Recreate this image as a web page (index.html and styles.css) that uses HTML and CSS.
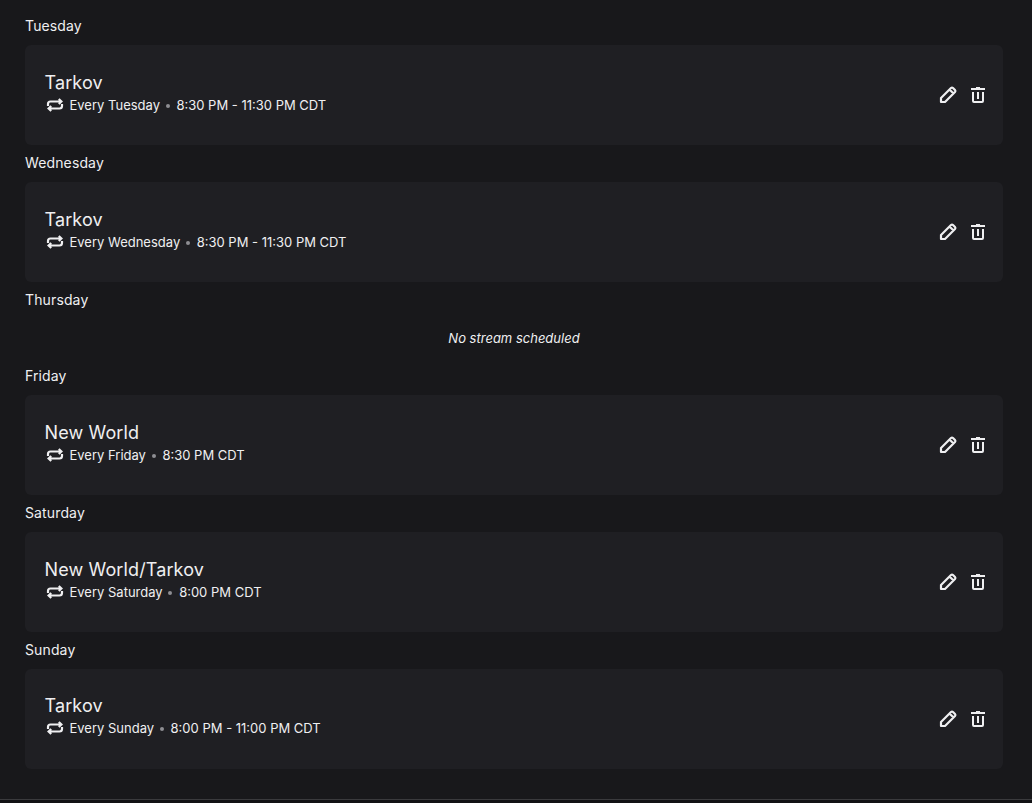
FILE: index.html
```html
<!DOCTYPE html>
<html lang="en">
<head>
<meta charset="utf-8">
<title>Schedule</title>
<link rel="stylesheet" href="styles.css">
</head>
<body>
<svg class="defs" width="0" height="0" aria-hidden="true">
  <symbol id="repeat" viewBox="0 0 20 20"><path fill="none" stroke="currentColor" stroke-width="2.200" d="M3 11V9A2.500 2.500 0 0 1 5.500 6.500H16M13.800 4l2.600 2.500L13.800 9M17 9v2A2.500 2.500 0 0 1 14.500 13.500H4M6.200 11L3.600 13.500 6.200 16"/></symbol>
  <symbol id="pencil" viewBox="0 0 20 20"><path fill="none" stroke="currentColor" stroke-width="2.200" stroke-linejoin="round" d="M3 17v-4L13 3a1.500 1.500 0 0 1 2 0l2 2a1.500 1.500 0 0 1 0 2L7 17ZM11.500 4.500l4 4"/></symbol>
  <symbol id="trash" viewBox="0 0 20 20"><path fill="currentColor" d="M12 2H8v1H3v2h14V3h-5V2z"/><path fill="currentColor" d="M4 7v9a2 2 0 0 0 2 2h8a2 2 0 0 0 2-2V7h-2v9H6V7H4z"/><path fill="currentColor" d="M11 7H9v7h2V7z"/></symbol>
</svg>
<main class="schedule">
  <section class="day">
    <h2 class="day-label">Tuesday</h2>
    <article class="card">
      <div class="info">
        <div class="title">Tarkov</div>
        <div class="meta"><svg class="repeat"><use href="#repeat"/></svg><span>Every Tuesday</span><i class="dot"></i><span>8:30 PM - 11:30 PM CDT</span></div>
      </div>
      <div class="actions"><svg class="icon"><use href="#pencil"/></svg><svg class="icon"><use href="#trash"/></svg></div>
    </article>
  </section>
  <section class="day">
    <h2 class="day-label">Wednesday</h2>
    <article class="card">
      <div class="info">
        <div class="title">Tarkov</div>
        <div class="meta"><svg class="repeat"><use href="#repeat"/></svg><span>Every Wednesday</span><i class="dot"></i><span>8:30 PM - 11:30 PM CDT</span></div>
      </div>
      <div class="actions"><svg class="icon"><use href="#pencil"/></svg><svg class="icon"><use href="#trash"/></svg></div>
    </article>
  </section>
  <section class="day">
    <h2 class="day-label">Thursday</h2>
    <p class="empty">No stream scheduled</p>
  </section>
  <section class="day">
    <h2 class="day-label">Friday</h2>
    <article class="card">
      <div class="info">
        <div class="title">New World</div>
        <div class="meta"><svg class="repeat"><use href="#repeat"/></svg><span>Every Friday</span><i class="dot"></i><span>8:30 PM CDT</span></div>
      </div>
      <div class="actions"><svg class="icon"><use href="#pencil"/></svg><svg class="icon"><use href="#trash"/></svg></div>
    </article>
  </section>
  <section class="day">
    <h2 class="day-label">Saturday</h2>
    <article class="card">
      <div class="info">
        <div class="title">New World/Tarkov</div>
        <div class="meta"><svg class="repeat"><use href="#repeat"/></svg><span>Every Saturday</span><i class="dot"></i><span>8:00 PM CDT</span></div>
      </div>
      <div class="actions"><svg class="icon"><use href="#pencil"/></svg><svg class="icon"><use href="#trash"/></svg></div>
    </article>
  </section>
  <section class="day">
    <h2 class="day-label">Sunday</h2>
    <article class="card">
      <div class="info">
        <div class="title">Tarkov</div>
        <div class="meta"><svg class="repeat"><use href="#repeat"/></svg><span>Every Sunday</span><i class="dot"></i><span>8:00 PM - 11:00 PM CDT</span></div>
      </div>
      <div class="actions"><svg class="icon"><use href="#pencil"/></svg><svg class="icon"><use href="#trash"/></svg></div>
    </article>
  </section>
</main>
<div class="rule"></div>
</body>
</html>
```
FILE: styles.css
```css
* { box-sizing: border-box; }
html, body { margin: 0; height: 803px; overflow: hidden; }
body {
  background: #18181b;
  color: #efeff1;
  font-family: Inter, "Liberation Sans", sans-serif;
  display: flex;
  flex-direction: column;
}
.defs { position: absolute; }
.schedule { padding: 8.5px 29px 0 25px; flex: 1; }
.day-label {
  margin: 0;
  font-size: 14px;
  font-weight: 400;
  letter-spacing: 0.13px;
  line-height: 20.9px;
  padding: 7.6px 0 8.4px;
}
.card {
  height: 100px;
  background: #1f1f23;
  border-radius: 6px;
  padding: 0 15px 0 19.5px;
  display: flex;
  align-items: center;
  justify-content: space-between;
}
.info { padding-bottom: 3.9px; }
.title {
  font-size: 18px;
  letter-spacing: 0.12px;
  line-height: 22px;
  margin-bottom: 1px;
}
.meta {
  display: flex;
  align-items: center;
  font-size: 13px;
  line-height: 20px;
}
.repeat { width: 20px; height: 20px; margin-right: 5px; }
.dot {
  width: 4px;
  height: 4px;
  border-radius: 50%;
  background: #8e8e93;
  margin: 2px 6.8px 0 5.7px;
}
.actions { display: flex; gap: 10px; }
.icon { width: 20px; height: 20px; }
.empty {
  margin: 0;
  height: 39px;
  line-height: 39px;
  font-size: 13px;
  font-style: italic;
  text-align: center;
}
.rule { height: 4px; flex: none; background: #121214; border-top: 1px solid #3a3a3d; }
```
